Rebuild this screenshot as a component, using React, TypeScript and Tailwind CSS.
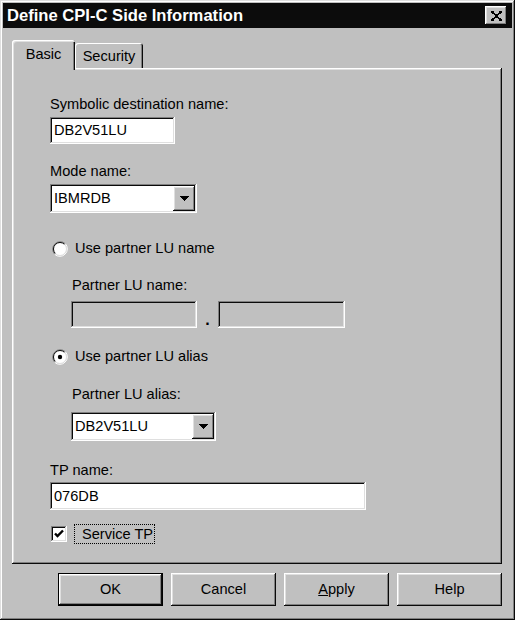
import React from "react";

const raised =
  "shadow-[inset_-1px_-1px_0_#0a0a0a,inset_1px_1px_0_#ffffff,inset_-2px_-2px_0_#808080,inset_2px_2px_0_#dfdfdf]";
const sunken =
  "shadow-[inset_-1px_-1px_0_#ffffff,inset_1px_1px_0_#808080,inset_-2px_-2px_0_#dfdfdf,inset_2px_2px_0_#0a0a0a]";

function CloseGlyph() {
  return (
    <svg width="11" height="10" viewBox="0 0 8 7" shapeRendering="crispEdges">
      <path
        fill="#000"
        d="M0 0h2v1H0zM6 0h2v1H6zM1 1h2v1H1zM5 1h2v1H5zM2 2h4v1H2zM3 3h2v1H3zM2 4h4v1H2zM1 5h2v1H1zM5 5h2v1H5zM0 6h2v1H0zM6 6h2v1H6z"
      />
    </svg>
  );
}

function Arrow() {
  return (
    <svg width="9" height="5" viewBox="0 0 9 5" shapeRendering="crispEdges">
      <path fill="#000" d="M0 0h9v1H0zM1 1h7v1H1zM2 2h5v1H2zM3 3h3v1H3zM4 4h1v1H4z" />
    </svg>
  );
}

function Radio({ checked }: { checked?: boolean }) {
  return (
    <svg width="16" height="16" viewBox="0 0 16 16" className="shrink-0">
      <circle cx="8" cy="8" r="6.5" fill="#ffffff" />
      <path d="M2.7 13.3 A7.5 7.5 0 0 1 13.3 2.7" stroke="#808080" strokeWidth="1" fill="none" />
      <path d="M13.3 2.7 A7.5 7.5 0 0 1 2.7 13.3" stroke="#ffffff" strokeWidth="1" fill="none" />
      <path d="M3.4 12.6 A6.5 6.5 0 0 1 12.6 3.4" stroke="#0a0a0a" strokeWidth="1" fill="none" />
      <path d="M12.6 3.4 A6.5 6.5 0 0 1 3.4 12.6" stroke="#dfdfdf" strokeWidth="1" fill="none" />
      {checked && <circle cx="8" cy="8" r="2.2" fill="#000" />}
    </svg>
  );
}

function Combo({ value, width }: { value: string; width: string }) {
  return (
    <div className={`${width} h-[29px] bg-white ${sunken} p-[2px] flex`}>
      <div className="flex-1 flex items-center pl-[2px]">{value}</div>
      <div className={`w-[22px] bg-[#c0c0c0] ${raised} flex items-center justify-center`}>
        <Arrow />
      </div>
    </div>
  );
}

function Button({ children, isDefault }: { children: React.ReactNode; isDefault?: boolean }) {
  return (
    <div
      className={`w-[105px] h-[33px] bg-[#c0c0c0] flex items-center justify-center ${
        isDefault ? "border border-black" : ""
      } ${raised}`}
    >
      {children}
    </div>
  );
}

export default function App() {
  return (
    <div className="w-[515px] h-[620px] bg-[#c0c0c0] font-['Liberation_Sans',Arial,sans-serif] text-black text-[14.6px] leading-[17px] whitespace-nowrap p-[3px] flex flex-col shadow-[inset_-1px_-1px_0_#0a0a0a,inset_1px_1px_0_#dfdfdf,inset_-2px_-2px_0_#808080,inset_2px_2px_0_#ffffff]">
      {/* Title bar */}
      <div className="h-[25px] bg-[#0c0c0c] flex items-center pl-[4px] pr-[5px]">
        <span className="flex-1 text-white font-bold text-[16.6px] leading-[20px]">
          Define CPI-C Side Information
        </span>
        <div className={`w-[22px] h-[19px] bg-[#c0c0c0] ${raised} flex items-center justify-center`}>
          <CloseGlyph />
        </div>
      </div>

      <div className="mt-[12px] pl-[9px] pr-[10px] flex flex-col">
        {/* Tabs */}
        <div className="flex items-end h-[28px]">
          <div className="relative z-10 w-[63px] h-[30px] -mb-[2px] bg-[#c0c0c0] rounded-t-[3px] flex justify-center pt-[6px] shadow-[inset_1px_1px_0_#ffffff,inset_2px_2px_0_#dfdfdf,inset_-1px_0_0_#0a0a0a,inset_-2px_0_0_#808080]">
            Basic
          </div>
          <div className="w-[68px] h-[25px] bg-[#c0c0c0] rounded-t-[3px] flex justify-center pt-[5px] shadow-[inset_1px_1px_0_#ffffff,inset_-1px_0_0_#0a0a0a,inset_-2px_0_0_#808080]">
            Security
          </div>
        </div>

        {/* Panel */}
        <div className="h-[496px] bg-[#c0c0c0] pl-[38px] pt-[28px] flex flex-col items-start shadow-[inset_-1px_-1px_0_#0a0a0a,inset_1px_1px_0_#ffffff,inset_-2px_-2px_0_#808080,inset_2px_2px_0_#dfdfdf]">
          <div>Symbolic destination name:</div>
          <div className={`mt-[4px] w-[125px] h-[27px] bg-white ${sunken} pl-[4px] flex items-center`}>
            DB2V51LU
          </div>

          <div className="mt-[19px]">Mode name:</div>
          <div className="mt-[4px]">
            <Combo value="IBMRDB" width="w-[147px]" />
          </div>

          <div className="mt-[27px] ml-[2px] flex items-center gap-[7px]">
            <Radio />
            <span>Use partner LU name</span>
          </div>

          <div className="mt-[20px] ml-[22px]">Partner LU name:</div>
          <div className="mt-[7px] ml-[21px] flex">
            <div className={`w-[126px] h-[27px] bg-[#c0c0c0] ${sunken}`} />
            <span className="w-[21px] self-end text-center font-bold text-[16px]">.</span>
            <div className={`w-[127px] h-[27px] bg-[#c0c0c0] ${sunken}`} />
          </div>

          <div className="mt-[20px] ml-[2px] flex items-center gap-[7px]">
            <Radio checked />
            <span>Use partner LU alias</span>
          </div>

          <div className="mt-[21px] ml-[22px]">Partner LU alias:</div>
          <div className="mt-[9px] ml-[21px]">
            <Combo value="DB2V51LU" width="w-[145px]" />
          </div>

          <div className="mt-[21px]">TP name:</div>
          <div className={`mt-[3px] w-[316px] h-[28px] bg-white ${sunken} pl-[4px] flex items-center`}>
            076DB
          </div>

          <div className="mt-[14px] ml-[1px] flex items-center gap-[7px]">
            <div className={`w-[16px] h-[16px] bg-white ${sunken} flex items-center justify-center`}>
              <svg width="16" height="16" viewBox="0 0 16 16">
                <path d="M4 7.5 L6.5 10 L12 4.5" stroke="#000" strokeWidth="2.4" fill="none" />
              </svg>
            </div>
            <div className="h-[20px] w-[81px] border border-dotted border-black pl-[7px] flex items-center">
              Service TP
            </div>
          </div>
        </div>

        {/* Buttons */}
        <div className="mt-[9px] flex justify-end gap-[8px]">
          <Button isDefault>OK</Button>
          <Button>Cancel</Button>
          <Button>
            <span>
              <span className="underline">A</span>pply
            </span>
          </Button>
          <Button>Help</Button>
        </div>
      </div>
    </div>
  );
}
